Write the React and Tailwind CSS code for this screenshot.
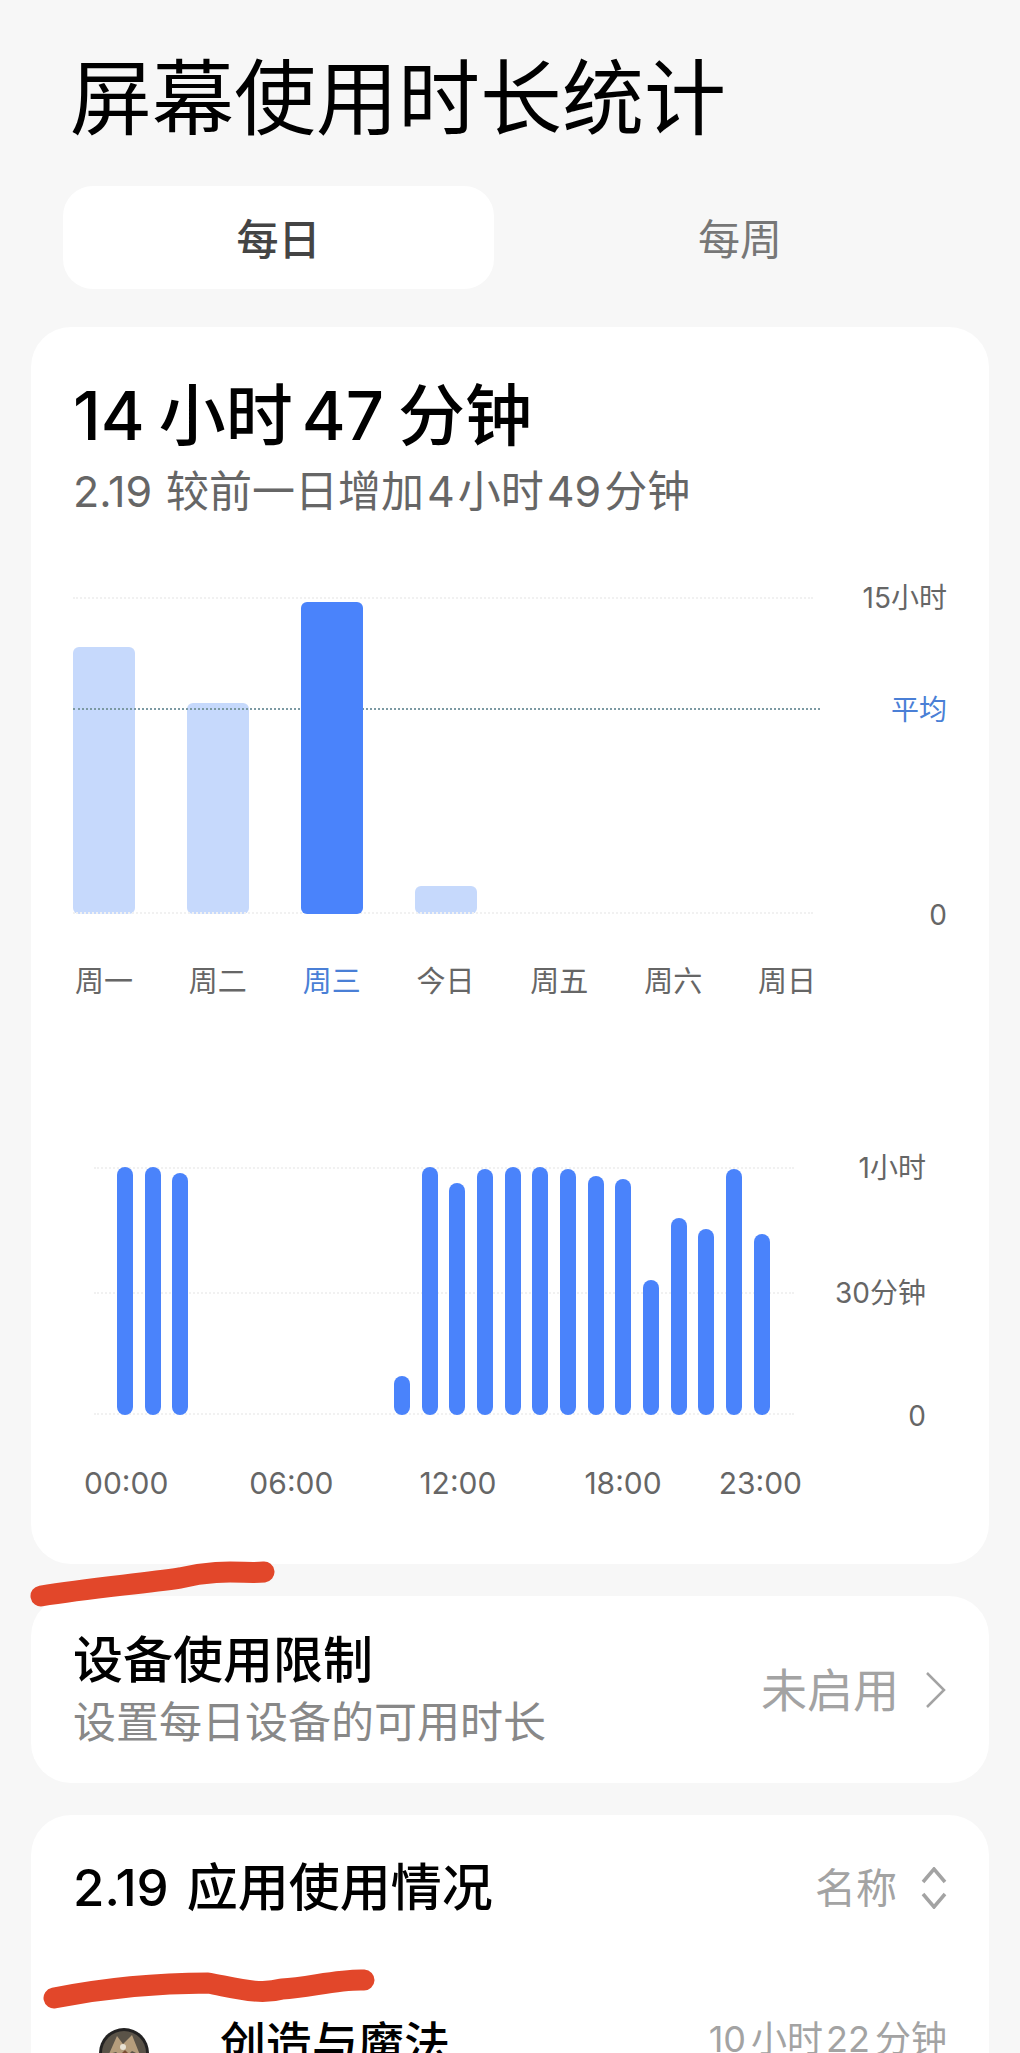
const cjk = "[font-family:Inter,'Noto_Sans_CJK_SC',sans-serif]";

const weekBars = [
  { day: '周一', height: 267 },
  { day: '周二', height: 211 },
  { day: '周三', height: 312, active: true },
  { day: '今日', height: 28 },
  { day: '周五', height: 0 },
  { day: '周六', height: 0 },
  { day: '周日', height: 0 },
];

const hourBars = [248, 248, 242, 0, 0, 0, 0, 0, 0, 0, 39, 248, 232, 246, 248, 248, 246, 239, 236, 135, 197, 186, 246, 181];

const timeLabels = [
  { label: '00:00', gap: 'ml-[-10px]' },
  { label: '06:00', gap: 'ml-[81px]' },
  { label: '12:00', gap: 'ml-[86px]' },
  { label: '18:00', gap: 'ml-[88px]' },
  { label: '23:00', gap: 'ml-[57px]' },
];

function GridLine({ className }) {
  return <div className={`absolute left-0 border-t-2 border-dotted border-[#f1f1f1] ${className}`} />;
}

function AxisLabel({ className, color = 'text-[#666]', children }) {
  return (
    <span className={`absolute right-0 text-[28px] leading-[40px] ${color} ${className}`}>{children}</span>
  );
}

function WeekChart() {
  return (
    <>
      <div className="relative h-[317px] w-[874px]">
        <GridLine className="top-0 w-[740px]" />
        <GridLine className="bottom-0 w-[740px]" />
        <div className="flex h-full items-end gap-[52px]">
          {weekBars.map((bar) => (
            <div
              key={bar.day}
              style={{ height: bar.height }}
              className={`w-[62px] rounded-[6px] ${bar.active ? 'relative z-10 bg-[#4a83fb]' : 'bg-[#c6d9fc]'}`}
            />
          ))}
        </div>
        <div className="absolute left-0 top-[111px] w-[747px] border-t-2 border-dotted border-[#7c9aa3]" />
        <AxisLabel className="top-[-19px]">15小时</AxisLabel>
        <AxisLabel className="top-[93px]" color="text-[#4a7fd6]">平均</AxisLabel>
        <AxisLabel className="bottom-[-21px]">0</AxisLabel>
      </div>
      <div className="mt-[48px] flex w-[745px] gap-[52px]">
        {weekBars.map((bar) => (
          <span
            key={bar.day}
            className={`w-[62px] whitespace-nowrap text-center text-[29px] leading-[40px] ${bar.active ? 'text-[#4a7fd6]' : 'text-[#666]'}`}
          >
            {bar.day}
          </span>
        ))}
      </div>
    </>
  );
}

function HourChart() {
  return (
    <div className="ml-[21px]">
      <div className="relative h-[248px] w-[832px]">
        <GridLine className="top-0 w-[700px]" />
        <GridLine className="top-[125px] w-[700px]" />
        <GridLine className="bottom-0 w-[700px]" />
        <div className="relative flex h-full items-end gap-[11.7px] pl-[23px]">
          {hourBars.map((h, i) => (
            <div
              key={i}
              style={{ height: h }}
              className="w-4 shrink-0 rounded-full bg-[#4a83fb]"
            />
          ))}
        </div>
        <AxisLabel className="top-[-19px]">1小时</AxisLabel>
        <AxisLabel className="top-[106px]">30分钟</AxisLabel>
        <AxisLabel className="bottom-[-21px]">0</AxisLabel>
      </div>
      <div className="mt-[48px] flex">
        {timeLabels.map((t) => (
          <span key={t.label} className={`${t.gap} text-[30px] leading-[40px] text-[#666]`}>
            {t.label}
          </span>
        ))}
      </div>
    </div>
  );
}

function Marker({ className, d, width }) {
  return (
    <svg className={`pointer-events-none absolute z-20 ${className}`} width={width} height="50" fill="none">
      <path d={d} stroke="#e2472a" strokeWidth="21" strokeLinecap="round" strokeLinejoin="round" />
    </svg>
  );
}

function AppIcon() {
  return (
    <svg className="mt-[13px] shrink-0" width="50" height="50" viewBox="0 0 50 50">
      <circle cx="25" cy="25" r="25" fill="#232222" />
      <circle cx="25" cy="25" r="22" fill="#5a5348" />
      <path d="M10 26 L18 8 L24 16 L33 7 L41 27 L33 23 L25 31 L17 24 Z" fill="#b59d7c" />
      <path d="M18 30 L26 22 L36 32 L32 50 L14 50 Z" fill="#7a4c32" />
      <circle cx="24" cy="19" r="3" fill="#e8e2d4" />
      <circle cx="13" cy="35" r="3" fill="#c9b08c" />
      <circle cx="38" cy="37" r="3" fill="#a9a294" />
    </svg>
  );
}

export default function App() {
  return (
    <div className={`relative h-[2053px] w-[1020px] overflow-hidden bg-[#f7f7f7] pt-[49px] ${cjk}`}>
      <h1 className="pl-[70px] text-[82px] font-normal leading-[100px] text-black">屏幕使用时长统计</h1>

      <div className="ml-[63px] mt-[37px] flex h-[103px]">
        <div className="flex w-[431px] items-center justify-center rounded-[30px] bg-white pt-[4px] text-[42px] font-medium text-[#444]">
          每日
        </div>
        <div className="flex w-[492px] items-center justify-center pt-[4px] text-[42px] text-[#777]">每周</div>
      </div>

      <section className="mx-[31px] mt-[38px] rounded-[40px] bg-white pb-[61px] pl-[42px] pt-[49px]">
        <div className="flex text-[67px] font-medium leading-[80px] text-black">
          <span>14</span>
          <span className="ml-[14px]">小时</span>
          <span className="ml-[9px]">47</span>
          <span className="ml-[14px]">分钟</span>
        </div>
        <div className="mt-[10px] flex whitespace-pre text-[43px] leading-[50px] text-[#666]">
          <span>2.19</span>
          <span className="ml-[14px]">较前一日增加</span>
          <span className="ml-[3px]">4</span>
          <span className="ml-[3px]">小时</span>
          <span className="ml-[3px]">49</span>
          <span className="ml-[3px]">分钟</span>
        </div>
        <div className="mt-[81px]">
          <WeekChart />
        </div>
        <div className="mt-[165px]">
          <HourChart />
        </div>
      </section>

      <section className="mx-[31px] mt-[32px] flex h-[187px] items-center justify-between rounded-[40px] bg-white pl-[42px] pr-[42px]">
        <div className="pt-[3px]">
          <div className="text-[50px] font-medium leading-[60px] text-black">设备使用限制</div>
          <div className="mt-[2px] text-[43px] leading-[60px] text-[#888]">设置每日设备的可用时长</div>
        </div>
        <div className="flex items-center gap-[26px]">
          <span className="text-[46px] leading-[60px] text-[#a3a3a3]">未启用</span>
          <svg width="22" height="38" viewBox="0 0 22 38" fill="none">
            <path d="M2 2 L19 19 L2 36" stroke="#a3a3a3" strokeWidth="2.5" />
          </svg>
        </div>
      </section>

      <section className="mx-[31px] mt-[32px] rounded-t-[40px] bg-white pl-[42px] pr-[42px] pt-[43px]">
        <div className="flex items-center justify-between">
          <div className="flex text-[51px] font-medium leading-[60px] text-black">
            <span>2.19</span>
            <span className="ml-[18px]">应用使用情况</span>
          </div>
          <div className="flex items-center gap-[24px]">
            <span className="text-[41px] leading-[60px] text-[#a3a3a3]">名称</span>
            <svg width="26" height="42" viewBox="0 0 26 42" fill="none">
              <path d="M2 15 L13 2 L24 15 M2 27 L13 40 L24 27" stroke="#a3a3a3" strokeWidth="3.5" />
            </svg>
          </div>
        </div>
        <div className="mt-[97px] flex items-start justify-between">
          <div className="flex items-start gap-[71px] pl-[26px]">
            <AppIcon />
            <span className="text-[46px] font-medium leading-[56px] text-black">创造与魔法</span>
          </div>
          <div className="-mt-[4px] flex text-[36px] leading-[56px] text-[#a3a3a3]">
            <span>10</span>
            <span className="ml-[5px]">小时</span>
            <span className="ml-[3px]">22</span>
            <span className="ml-[5px]">分钟</span>
          </div>
        </div>
      </section>

      <Marker className="left-0 top-[1558px]" width={300} d="M41 38 C 90 30 140 26 180 20 C 220 10 245 16 264 14" />
      <Marker className="left-0 top-[1965px]" width={400} d="M54 33 C 110 22 160 18 208 18 C 240 24 260 30 282 24 C 310 22 340 14 364 15" />
    </div>
  );
}
